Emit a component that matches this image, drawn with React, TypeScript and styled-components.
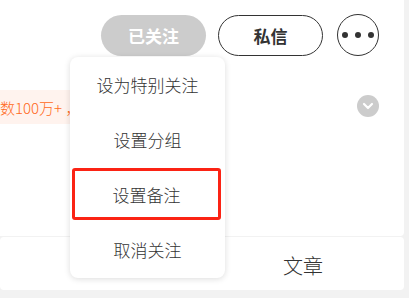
import React from "react";
import styled, { createGlobalStyle } from "styled-components";

const Global = createGlobalStyle`
  html, body { margin: 0; padding: 0; background: #f2f2f2; }
  body { font-family: "Noto Sans CJK SC", "Noto Sans", sans-serif; }
  #root { width: 409px; height: 298px; overflow: hidden; }
`;

const Page = styled.div`
  position: relative;
  width: 404px;
  height: 298px;
  display: flex;
  flex-direction: column;
  gap: 1px;
`;

const TopCard = styled.div`
  background: #fff;
  height: 236px;
  border-bottom-right-radius: 4px;
  display: flex;
  flex-direction: column;
`;

const ActionBar = styled.div`
  display: flex;
  justify-content: flex-end;
  align-items: center;
  padding: 14px 25px 0 0;
`;

const PillButton = styled.button<{ $filled?: boolean }>`
  width: 105px;
  height: 41px;
  border-radius: 21px;
  font-family: "Noto Sans CJK SC", sans-serif;
  font-size: 17px;
  font-weight: 700;
  margin-left: 12px;
  padding: 0;
  cursor: pointer;
  background: ${(p) => (p.$filled ? "#cccccc" : "#fff")};
  color: ${(p) => (p.$filled ? "#fff" : "#333")};
  border: ${(p) => (p.$filled ? "none" : "1px solid #333")};
`;

const MoreButton = styled.button`
  width: 42px;
  height: 42px;
  border-radius: 50%;
  border: 1px solid #333;
  background: #fff;
  margin-left: 14px;
  padding: 0;
  display: flex;
  align-items: center;
  justify-content: center;
  gap: 7px;
`;

const Dot = styled.span`
  width: 6px;
  height: 6px;
  border-radius: 50%;
  background: #333;
`;

const InfoRow = styled.div`
  display: flex;
  align-items: center;
  justify-content: space-between;
  margin-top: 34px;
  padding-right: 25px;
`;

const Tag = styled.div`
  height: 34px;
  width: 110px;
  background: #fff3ee;
  color: #ff6a1a;
  font-size: 15px;
  font-weight: 300;
  display: flex;
  align-items: center;
  white-space: nowrap;
`;

const Chevron = styled.div`
  width: 22px;
  height: 22px;
  border-radius: 50%;
  background: #cccccc;
  display: flex;
  align-items: center;
  justify-content: center;
  margin-top: -2px;
`;

const TabCard = styled.div`
  background: #fff;
  height: 53px;
  border-radius: 4px;
  display: flex;
  align-items: center;
`;

const Tab = styled.div`
  flex: 1;
  text-align: center;
  font-size: 20px;
  font-weight: 300;
  color: #333;
  padding-top: 3px;
`;

const Menu = styled.div`
  position: absolute;
  left: 70px;
  top: 57px;
  width: 155px;
  background: #fff;
  border-radius: 8px;
  box-shadow: 0 1px 6px rgba(0, 0, 0, 0.14);
  display: flex;
  flex-direction: column;
  padding-bottom: 1px;
`;

const MenuItem = styled.div<{ $marked?: boolean }>`
  height: 55px;
  display: flex;
  align-items: center;
  justify-content: center;
  font-size: 17px;
  font-weight: 300;
  color: #333;
  box-sizing: border-box;
  ${(p) =>
    p.$marked
      ? `
    border: 3px solid #fb2314;
    border-radius: 3px;
    margin: 1px 4px 2px 2px;
    height: 52px;
  `
      : ""}
`;

export default function App() {
  return (
    <>
      <Global />
      <Page>
        <TopCard>
          <ActionBar>
            <PillButton $filled>已关注</PillButton>
            <PillButton>私信</PillButton>
            <MoreButton aria-label="更多">
              <Dot />
              <Dot />
              <Dot />
            </MoreButton>
          </ActionBar>
          <InfoRow>
            <Tag>数100万+ ，</Tag>
            <Chevron>
              <svg width="12" height="8" viewBox="0 0 12 8">
                <path d="M2 2 L6 6 L10 2" stroke="#fff" strokeWidth="2.2" fill="none" strokeLinecap="round" strokeLinejoin="round" />
              </svg>
            </Chevron>
          </InfoRow>
        </TopCard>
        <TabCard>
          <Tab />
          <Tab>文章</Tab>
        </TabCard>
        <Menu>
          <MenuItem>设为特别关注</MenuItem>
          <MenuItem>设置分组</MenuItem>
          <MenuItem $marked>设置备注</MenuItem>
          <MenuItem>取消关注</MenuItem>
        </Menu>
      </Page>
    </>
  );
}
